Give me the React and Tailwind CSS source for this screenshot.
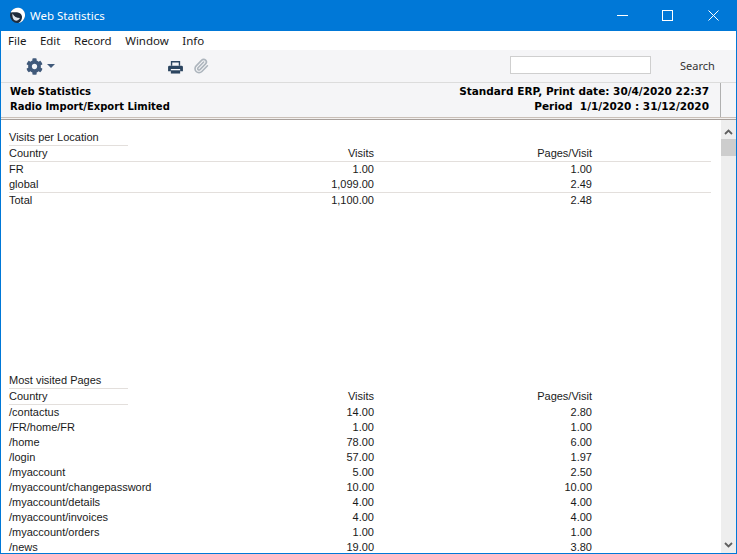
import React from "react";
import { FaCog } from "react-icons/fa";
import { Paperclip } from "lucide-react";

const LOCATIONS = [
  { name: "FR", visits: "1.00", pages: "1.00" },
  { name: "global", visits: "1,099.00", pages: "2.49" },
];

const PAGES = [
  { name: "/contactus", visits: "14.00", pages: "2.80" },
  { name: "/FR/home/FR", visits: "1.00", pages: "1.00" },
  { name: "/home", visits: "78.00", pages: "6.00" },
  { name: "/login", visits: "57.00", pages: "1.97" },
  { name: "/myaccount", visits: "5.00", pages: "2.50" },
  { name: "/myaccount/changepassword", visits: "10.00", pages: "10.00" },
  { name: "/myaccount/details", visits: "4.00", pages: "4.00" },
  { name: "/myaccount/invoices", visits: "4.00", pages: "4.00" },
  { name: "/myaccount/orders", visits: "1.00", pages: "1.00" },
  { name: "/news", visits: "19.00", pages: "3.80" },
];

function Row({ name, visits, pages }) {
  return (
    <div className="grid h-[15px] grid-cols-[200px_165px_218px] items-center leading-[15px]">
      <span>{name}</span>
      <span className="text-right">{visits}</span>
      <span className="text-right">{pages}</span>
    </div>
  );
}

function SectionTitle({ children }) {
  return <div className="h-[16px] w-[119px] border-b border-[#e3dfdc] leading-[15px]">{children}</div>;
}

export default function App() {
  return (
    <div className="flex h-[554px] w-[737px] flex-col overflow-hidden border border-t-0 border-[#0078d7] bg-white font-['Liberation_Sans',sans-serif] text-[#1a1a1a]">
      <div className="flex h-[31px] shrink-0 items-center bg-[#0078d7] text-white">
        <svg className="ml-[8px] h-[17px] w-[17px]" viewBox="0 0 17 17">
          <circle cx="8.5" cy="8.5" r="7.500" fill="#1f2c3c" />
          <path d="M2 4.500C4 1 8 0 11 1c3.500 1.200 5.500 4.500 5 8-.5 3.500-3 6.500-6.500 7 2.500-1.500 3.800-4 3.500-6.500-.3-2.500-2.500-4-5-4.200-2.200-.2-4.300-.2-6 .2z" fill="#fff" />
          <path d="M3.500 6.500c1.500 3 4 4.500 7.500 4.500-1 2-3 3-5 2.500-2-1-3-4-2.500-7z" fill="#dfe6ee" />
        </svg>
        <span className="ml-[4px] font-['Noto_Sans',sans-serif] text-[11.5px]">Web Statistics</span>
        <div className="ml-auto flex items-center">
          <svg className="mr-[34px] h-[11px] w-[11px]" viewBox="0 0 11 11">
            <path d="M0 5.500h11" stroke="#fff" />
          </svg>
          <svg className="mr-[35px] h-[11px] w-[11px]" viewBox="0 0 11 11">
            <rect x="0.500" y="0.500" width="10" height="10" fill="none" stroke="#fff" />
          </svg>
          <svg className="mr-[17px] h-[11px] w-[11px]" viewBox="0 0 11 11">
            <path d="M0.500 0.500l10 10M10.500 0.500l-10 10" stroke="#fff" />
          </svg>
        </div>
      </div>

      <div className="flex h-[19px] shrink-0 items-center gap-[13.5px] pl-[7px] font-['Noto_Sans',sans-serif] text-[11.5px]">
        <span>File</span>
        <span>Edit</span>
        <span>Record</span>
        <span>Window</span>
        <span>Info</span>
      </div>

      <div className="flex h-[33px] shrink-0 items-center border-b border-[#dcdcdc] bg-[#f5f5f7] pb-[3px]">
        <FaCog className="ml-[25px] mt-[3px] text-[17px] text-[#40597a]" />
        <div className="ml-[4px] mt-[3px] h-0 w-0 border-x-[4px] border-t-[4px] border-x-transparent border-t-[#40597a]" />
        <svg className="ml-[113px] mt-[5px] h-[13px] w-[15px]" viewBox="0 0 16 14">
          <path d="M3.750 5V.750h8.500V5" fill="none" stroke="#2c4560" strokeWidth="1.500" />
          <path d="M1.500 5h13A1.500 1.500 0 0 1 16 6.500V11h-3V8.500H3V11H0V6.500A1.500 1.500 0 0 1 1.500 5z" fill="#2c4560" />
          <path d="M3 10h10v3.500H3z" fill="#2c4560" />
        </svg>
        <Paperclip className="ml-[10px] mt-[3px] h-[16px] w-[16px] text-[#adb5bd]" strokeWidth={2.4} />
        <div className="ml-[301px] h-[18px] w-[141px] border border-[#cfcfcf] bg-white" />
        <span className="ml-[29px] mt-[4px] font-['Noto_Sans',sans-serif] text-[11px] text-[#333]">Search</span>
      </div>

      <div className="flex h-[35px] shrink-0 border-b border-[#c9bfb8] bg-[#f5f5f7] font-['DejaVu_Sans',sans-serif] text-[10px] font-bold leading-[15px] text-black">
        <div className="flex w-[720px] justify-between border-r border-[#b0b0b0] pl-[9px] pr-[11px] pt-[1px]">
          <div>
            <div>Web Statistics</div>
            <div>Radio Import/Export Limited</div>
          </div>
          <div className="text-right text-[10.5px]">
            <div>Standard ERP, Print date: 30/4/2020 22:37</div>
            <div className="whitespace-pre">Period  1/1/2020 : 31/12/2020</div>
          </div>
        </div>
      </div>
      <div className="h-[1px] shrink-0 bg-[#f3f0ee]" />

      <div className="flex min-h-0 flex-1 border-t border-[#a8a09c]">
        <div className="min-w-0 flex-1 pl-[8px] pr-[10px] pt-[10px] text-[11px]">
          <SectionTitle>Visits per Location</SectionTitle>
          <div className="h-[16px] border-b border-[#e3dfdc]">
            <Row name="Country" visits="Visits" pages="Pages/Visit" />
          </div>
          {LOCATIONS.map((l) => (
            <Row key={l.name} {...l} />
          ))}
          <div className="border-t border-[#e3dfdc]">
            <Row name="Total" visits="1,100.00" pages="2.48" />
          </div>

          <div className="mt-[165px]">
            <SectionTitle>Most visited Pages</SectionTitle>
            <div className="h-[16px] w-[119px] whitespace-nowrap border-b border-[#e3dfdc]">
              <div className="w-[702px]">
                <Row name="Country" visits="Visits" pages="Pages/Visit" />
              </div>
            </div>
            {PAGES.map((p) => (
              <Row key={p.name} {...p} />
            ))}
          </div>
        </div>

        <div className="flex w-[15px] shrink-0 flex-col items-center bg-[#eeeeee] pt-[9px] pb-[5px]">
          <svg className="h-[6px] w-[9px]" viewBox="0 0 9 6">
            <path d="M1 5l3.500-3.500L8 5" fill="none" stroke="#606060" strokeWidth="1.800" />
          </svg>
          <div className="mt-[4px] h-[17px] w-full bg-[#cdcdcd]" />
          <svg className="mt-auto h-[6px] w-[9px]" viewBox="0 0 9 6">
            <path d="M1 1l3.500 3.500L8 1" fill="none" stroke="#606060" strokeWidth="1.800" />
          </svg>
        </div>
      </div>
    </div>
  );
}
